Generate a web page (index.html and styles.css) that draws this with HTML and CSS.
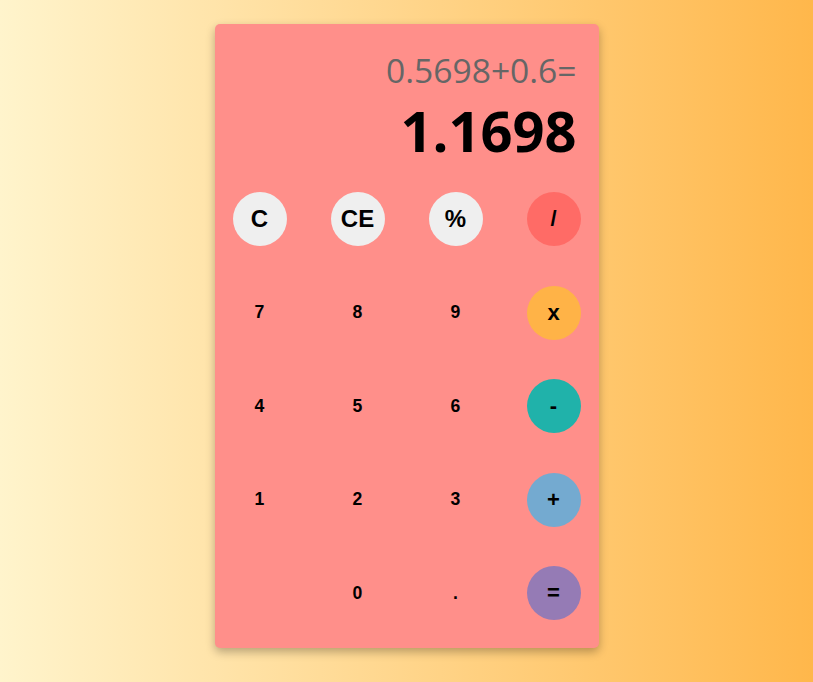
FILE: index.html
```html
<!DOCTYPE html>
<html lang="en">
<head>
<meta charset="utf-8">
<title>Calculator</title>
<link rel="stylesheet" href="styles.css">
</head>
<body>
<div class="calc">
  <div class="display">
    <div class="expr">0.5698+0.6=</div>
    <div class="result">1.1698</div>
  </div>
  <div class="keys">
    <button class="key key-fn">C</button>
    <button class="key key-fn">CE</button>
    <button class="key key-fn">%</button>
    <button class="key key-op op-div">/</button>

    <button class="key">7</button>
    <button class="key">8</button>
    <button class="key">9</button>
    <button class="key key-op op-mul">x</button>

    <button class="key">4</button>
    <button class="key">5</button>
    <button class="key">6</button>
    <button class="key key-op op-sub">-</button>

    <button class="key">1</button>
    <button class="key">2</button>
    <button class="key">3</button>
    <button class="key key-op op-add">+</button>

    <span class="key-blank"></span>
    <button class="key">0</button>
    <button class="key">.</button>
    <button class="key key-op op-eq">=</button>
  </div>
</div>
</body>
</html>
```
FILE: styles.css
```css
html, body {
  margin: 0;
  height: 100%;
}
body {
  background: linear-gradient(to right, #fff4cc 0%, #ffb74b 100%);
  font-family: "Liberation Sans", Arial, sans-serif;
  display: flex;
  justify-content: center;
  align-items: flex-start;
  padding-top: 24px;
  box-sizing: border-box;
}
.calc {
  width: 384px;
  background: #ff8f8a;
  border-radius: 5px;
  box-shadow: 0 4px 10px rgba(0, 0, 0, 0.28);
}
.display {
  padding: 29px 22px 0;
  text-align: right;
  font-family: "Open Sans", "Noto Sans", sans-serif;
}
.expr {
  font-size: 33.6px;
  line-height: 34px;
  color: #666666;
}
.result {
  margin-top: 15px;
  font-size: 56px;
  line-height: 56px;
  font-weight: 700;
  color: #000;
}
.keys {
  display: grid;
  grid-template-columns: repeat(4, 54px);
  grid-auto-rows: 54px;
  column-gap: 44px;
  row-gap: 39.5px;
  padding: 34px 18px 28px;
}
.key {
  width: 54px;
  height: 54px;
  border: none;
  border-radius: 50%;
  background: transparent;
  padding: 0;
  font-family: "Liberation Sans", Arial, sans-serif;
  font-weight: 700;
  font-size: 17.6px;
  color: #000;
  display: flex;
  align-items: center;
  justify-content: center;
}
.key-fn {
  background: #efefef;
  font-size: 24px;
}
.key-op {
  font-size: 22px;
}
.op-div { background: #ff6b66; }
.op-mul { background: #ffb347; }
.op-sub { background: #20b2aa; }
.op-add { background: #74aad0; }
.op-eq { background: #957bb5; }
```
